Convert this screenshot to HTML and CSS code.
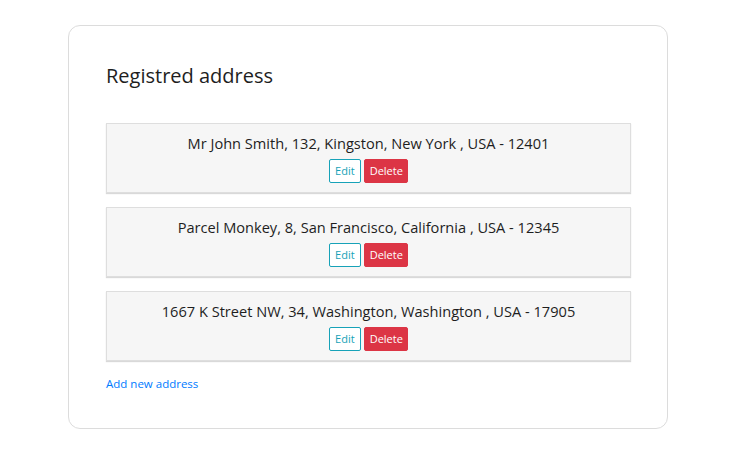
FILE: index.html
```html
<!DOCTYPE html>
<html>
<head>
<meta charset="utf-8">
<link rel="stylesheet" href="styles.css">
</head>
<body>
<div class="card">
  <h2 class="title">Registred address</h2>
  <div class="list">
    <div class="addr">
      <div class="addr-text">Mr John Smith, 132, Kingston, New York , USA - 12401</div>
      <div class="actions"><button class="btn btn-edit">Edit</button><button class="btn btn-delete">Delete</button></div>
    </div>
    <div class="addr">
      <div class="addr-text">Parcel Monkey, 8, San Francisco, California , USA - 12345</div>
      <div class="actions"><button class="btn btn-edit">Edit</button><button class="btn btn-delete">Delete</button></div>
    </div>
    <div class="addr">
      <div class="addr-text">1667 K Street NW, 34, Washington, Washington , USA - 17905</div>
      <div class="actions"><button class="btn btn-edit">Edit</button><button class="btn btn-delete">Delete</button></div>
    </div>
  </div>
  <a class="add" href="#">Add new address</a>
</div>
</body>
</html>
```
FILE: styles.css
```css
html, body { margin: 0; padding: 0; background: #fff; }
body { font-family: "Open Sans", "Noto Sans", sans-serif; color: #212529; padding: 25px 0 0 68px; }
.card {
  width: 600px;
  height: 404px;
  box-sizing: border-box;
  border: 1px solid #dcdcdc;
  border-radius: 12px;
  padding: 36px 36px 0 37px;
}
.title { margin: 0 0 33px 0; font-size: 20px; font-weight: 500; line-height: 28px; color: #1e1e1e; }
.list { display: flex; flex-direction: column; gap: 14px; }
.addr {
  height: 70px;
  box-sizing: border-box;
  background: #f6f6f6;
  border: 1px solid #dedede;
  box-shadow: 0 1px 1px rgba(0,0,0,0.15);
  display: flex; flex-direction: column; align-items: center;
  padding-top: 9px;
}
.addr-text { font-size: 14.6px; line-height: 20px; font-weight: 500; color: #1e1e1e; }
.actions { display: flex; gap: 3px; margin-top: 6px; }
.btn { font-family: inherit; font-size: 11px; height: 24px; border-radius: 2px; line-height: 22px; cursor: pointer; }
.btn-edit { background: #fff; border: 1px solid #17a2b8; color: #17a2b8; padding: 0 5.5px; }
.btn-delete { background: #dc3545; border: 1px solid #dc3545; color: #fff; padding: 0 4.5px; }
.add { display: inline-block; margin-top: 15px; font-size: 11.5px; color: #007bff; text-decoration: none; }
```
